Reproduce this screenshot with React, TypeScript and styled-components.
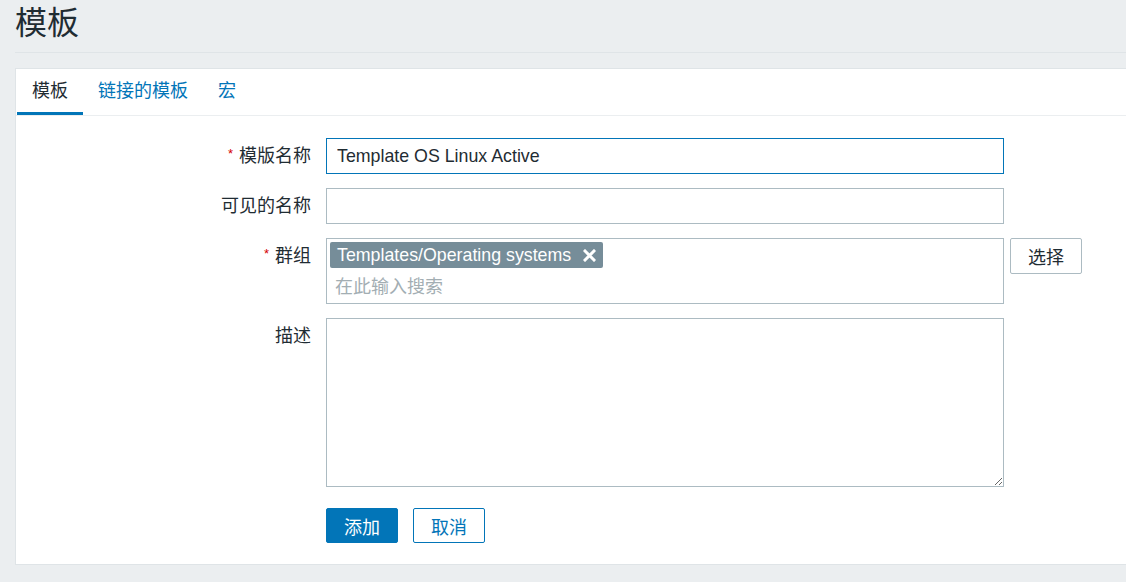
import React from "react";
import styled, { createGlobalStyle } from "styled-components";

const GlobalStyle = createGlobalStyle`
  html, body {
    margin: 0;
    padding: 0;
    background: #ebeef0;
    font-family: "Liberation Sans", "Noto Sans CJK SC", sans-serif;
    color: #1f2c33;
  }
  * { box-sizing: border-box; }
`;

const Page = styled.div`
  padding-left: 15px;
  min-height: 582px;
`;

const Header = styled.header`
  height: 53px;
  border-bottom: 1px solid #dfe4e7;
`;

const Title = styled.h1`
  margin: 0;
  font-size: 32px;
  font-weight: normal;
  line-height: 46px;
  color: #1f2c33;
`;

const Card = styled.section`
  margin-top: 15px;
  background: #ffffff;
  border: 1px solid #dfe4e7;
  border-right: none;
`;

const TabBar = styled.nav`
  display: flex;
  height: 47px;
  padding-left: 1px;
  border-bottom: 1px solid #ebeef0;
`;

const Tab = styled.a<{ $active?: boolean }>`
  display: block;
  height: 46px;
  padding: 0 15px;
  font-size: 18px;
  line-height: 44px;
  text-decoration: none;
  cursor: pointer;
  color: ${(p) => (p.$active ? "#1f2c33" : "#0275b8")};
  border-bottom: 3px solid ${(p) => (p.$active ? "#0275b8" : "transparent")};
`;

const Form = styled.form`
  display: grid;
  grid-template-columns: 295px 1fr;
  column-gap: 15px;
  row-gap: 14px;
  padding: 22px 0 21px 0;
`;

const Label = styled.label`
  height: 36px;
  text-align: right;
  font-size: 18px;
  line-height: 36px;
  color: #1f2c33;
`;

const Required = styled.span`
  color: #d40000;
  font-size: 13px;
  line-height: 0;
  vertical-align: 4px;
  margin-right: 6px;
`;

const TextInput = styled.input<{ $focused?: boolean }>`
  display: block;
  width: 678px;
  height: 36px;
  padding: 0 10px;
  border: 1px solid ${(p) => (p.$focused ? "#0275b8" : "#acbbc2")};
  border-radius: 0;
  background: #fff;
  font-family: "Liberation Sans", "Noto Sans CJK SC", sans-serif;
  font-size: 17.8px;
  color: #1f2c33;
  outline: none;
`;

const FieldRow = styled.div`
  display: flex;
  align-items: flex-start;
  gap: 6px;
`;

const MultiSelect = styled.div`
  width: 678px;
  height: 66px;
  border: 1px solid #acbbc2;
  padding: 3px;
  display: flex;
  flex-direction: column;
  align-items: flex-start;
`;

const Tag = styled.span`
  display: inline-flex;
  align-items: center;
  gap: 12px;
  height: 26px;
  padding: 1px 7px 0 7px;
  background: #768d99;
  color: #ffffff;
  border-radius: 2px;
  font-size: 17.8px;
  line-height: 25px;
`;

const Placeholder = styled.span`
  display: block;
  padding: 2px 0 0 5px;
  font-size: 18px;
  line-height: 34px;
  color: #a3aeb3;
`;

const SelectButton = styled.button`
  width: 72px;
  height: 36px;
  border: 1px solid #acbbc2;
  border-radius: 2px;
  background: #fff;
  color: #1f2c33;
  font-family: "Liberation Sans", "Noto Sans CJK SC", sans-serif;
  font-size: 18px;
  padding: 0;
  cursor: pointer;
`;

const TextArea = styled.textarea`
  width: 678px;
  height: 169px;
  border: 1px solid #acbbc2;
  border-radius: 0;
  padding: 6px 10px;
  font-family: "Liberation Sans", "Noto Sans CJK SC", sans-serif;
  font-size: 17.8px;
  outline: none;
  display: block;
`;

const Actions = styled.div`
  grid-column: 2;
  display: flex;
  gap: 15px;
  margin-top: 7px;
`;

const Button = styled.button<{ $primary?: boolean }>`
  width: 72px;
  height: 35px;
  padding: 0;
  border-radius: 2px;
  border: 1px solid #0275b8;
  background: ${(p) => (p.$primary ? "#0275b8" : "#ffffff")};
  color: ${(p) => (p.$primary ? "#ffffff" : "#0275b8")};
  font-family: "Liberation Sans", "Noto Sans CJK SC", sans-serif;
  font-size: 18px;
  cursor: pointer;
`;

const RemoveIcon = () => (
  <svg width="13" height="13" viewBox="0 0 13 13" aria-hidden="true">
    <path d="M2 2 L11 11 M11 2 L2 11" stroke="#ffffff" strokeWidth="3" strokeLinecap="square" />
  </svg>
);

export default function App() {
  return (
    <>
      <GlobalStyle />
      <Page>
        <Header>
          <Title>模板</Title>
        </Header>
        <Card>
          <TabBar>
            <Tab $active>模板</Tab>
            <Tab>链接的模板</Tab>
            <Tab>宏</Tab>
          </TabBar>
          <Form onSubmit={(e) => e.preventDefault()}>
            <Label>
              <Required>*</Required>模版名称
            </Label>
            <div>
              <TextInput $focused defaultValue="Template OS Linux Active" />
            </div>

            <Label>可见的名称</Label>
            <div>
              <TextInput />
            </div>

            <Label>
              <Required>*</Required>群组
            </Label>
            <FieldRow>
              <MultiSelect>
                <Tag>
                  Templates/Operating systems
                  <RemoveIcon />
                </Tag>
                <Placeholder>在此输入搜索</Placeholder>
              </MultiSelect>
              <SelectButton type="button">选择</SelectButton>
            </FieldRow>

            <Label>描述</Label>
            <div>
              <TextArea />
            </div>

            <Actions>
              <Button $primary type="submit">添加</Button>
              <Button type="button">取消</Button>
            </Actions>
          </Form>
        </Card>
      </Page>
    </>
  );
}
